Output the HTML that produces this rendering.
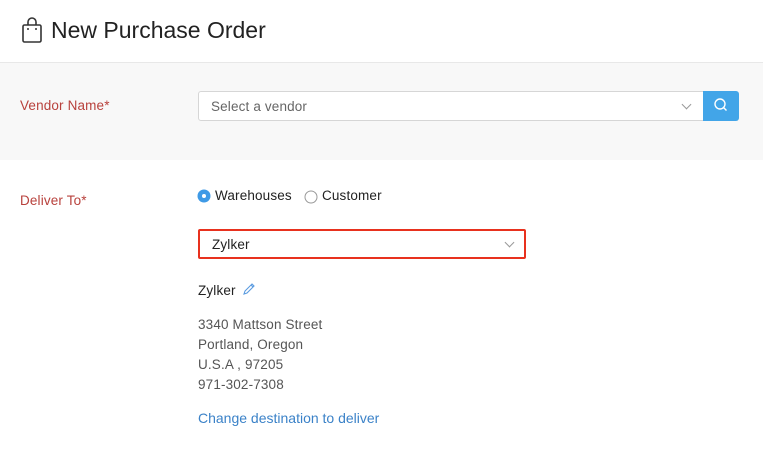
<!DOCTYPE html>
<html><head><meta charset="utf-8"><style>
*{box-sizing:border-box;margin:0;padding:0}
body{width:763px;height:451px;background:#fff;font-family:"Liberation Sans",sans-serif;font-size:13.5px;letter-spacing:0.15px;color:#333;position:relative;overflow:hidden}
.a{position:absolute}
.h{top:17px;left:51px;font-size:23px;letter-spacing:0px;color:#222;}
.band{top:62px;left:0;width:763px;height:98px;background:#f8f8f8;border-top:1px solid #e8e8e8}
.lab{color:#b8413c}
.inp{top:91px;left:198px;width:506px;height:30px;background:#fff;border:1px solid #d6d6d6;border-radius:3px 0 0 3px;padding:7px 12px;color:#666}
.btn{top:91px;left:703px;width:36px;height:30px;background:#42a5e8;border-radius:0 3px 3px 0}
.sel{top:229px;left:198px;width:328px;height:30px;border:2px solid #e8311e;border-radius:2px;padding:6px 12px;color:#222}
.chev{width:7px;height:7px;border-right:1.5px solid #999;border-bottom:1.5px solid #999;transform:rotate(45deg)}
.g{color:#555;line-height:20px}
</style></head><body>
<svg class="a" style="left:22px;top:17px" width="20" height="26" viewBox="0 0 20 26"><rect x="1" y="8" width="18" height="17" rx="1.5" fill="none" stroke="#333" stroke-width="1.6"/><path d="M6 8V5a4 4 0 0 1 8 0v3" fill="none" stroke="#333" stroke-width="1.6"/><circle cx="6" cy="12" r="1" fill="#333"/><circle cx="14" cy="12" r="1" fill="#333"/></svg>
<div class="a h">New Purchase Order</div>
<div class="a band"></div>
<div class="a lab" style="left:20px;top:98px">Vendor Name*</div>
<div class="a inp">Select a vendor</div>
<div class="a chev" style="left:683px;top:101px"></div>
<div class="a btn"><svg width="36" height="30"><circle cx="17" cy="13" r="5" fill="none" stroke="#fff" stroke-width="1.4"/><path d="M20.5 16.5l3 3" stroke="#fff" stroke-width="1.4"/></svg></div>
<div class="a lab" style="left:20px;top:193px">Deliver To*</div>
<svg class="a" style="left:197px;top:189px" width="14" height="14"><circle cx="7" cy="7" r="6.5" fill="#3f9ae6"/><circle cx="7" cy="7" r="2" fill="#fff"/></svg>
<div class="a" style="left:215px;top:188px;color:#222">Warehouses</div>
<svg class="a" style="left:304px;top:190px" width="14" height="14"><circle cx="7" cy="7" r="6" fill="#fff" stroke="#999"/></svg>
<div class="a" style="left:322px;top:188px;color:#222">Customer</div>
<div class="a sel">Zylker</div>
<div class="a chev" style="left:506px;top:239px"></div>
<div class="a" style="left:198px;top:283px;color:#222">Zylker</div>
<svg class="a" style="left:242px;top:282px" width="14" height="14"><path d="M2 12l1-3 7-7 2 2-7 7z M9 3l2 2" fill="none" stroke="#5a9be0" stroke-width="1.1"/></svg>
<div class="a g" style="left:198px;top:315px">3340 Mattson Street<br>Portland, Oregon<br>U.S.A , 97205<br>971-302-7308</div>
<div class="a" style="left:198px;top:410px;color:#3b82c8;font-size:14px;letter-spacing:0">Change destination to deliver</div>
</body></html>
